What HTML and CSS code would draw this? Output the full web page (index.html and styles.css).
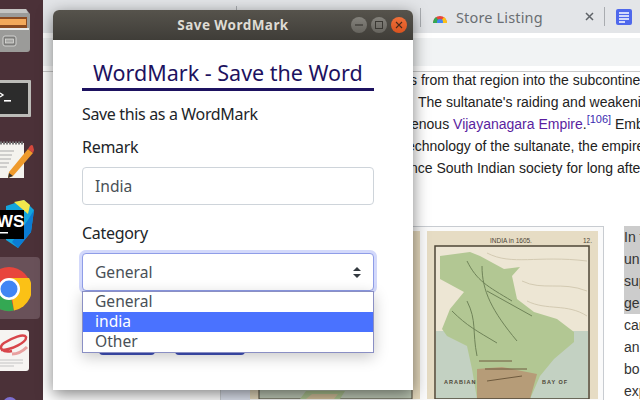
FILE: index.html
```html
<!DOCTYPE html>
<html lang="en">
<head>
	<meta charset="UTF-8">
	<title>Save WordMark</title>
	<link rel="stylesheet" href="styles.css">
</head>
<body>
	<div class="desktop">
		<div class="dock">
			<svg class="dock-icon files" width="31" height="44" viewBox="0 0 31 44">
				<path d="M3 0H26L30 5V40Q30 43 27 43H0V0Z" fill="#9b9b99"/>
				<path d="M0 0H26L28 4H0Z" fill="#c4c4c2"/>
				<rect x="0" y="8" width="27" height="11" fill="#8a4a20"/>
				<rect x="0" y="10" width="26" height="6" fill="#f3a95a"/>
				<rect x="0" y="19" width="29" height="2" fill="#e9e9e7"/>
				<rect x="3" y="27" width="13" height="10" rx="2" fill="#7d7d7b" stroke="#d2d2d0"/>
				<rect x="5.500" y="30" width="8" height="4" fill="#a9a9a7" stroke="#e4e4e2" stroke-width=".7"/>
			</svg>
			<svg class="dock-icon term" width="32" height="38" viewBox="0 0 32 38">
				<rect x="-3" y="0" width="34" height="37" rx="1" fill="#bcbcb8"/>
				<rect x="-3" y="3" width="31" height="31" fill="#2c2c2c"/>
				<path d="M0 13L3 15L0 17" fill="none" stroke="#fff" stroke-width="1.4"/>
				<rect x="4" y="20" width="7" height="1.6" fill="#fff"/>
			</svg>
			<svg class="dock-icon notes" width="34" height="40" viewBox="0 0 34 40">
				<path d="M0 2H24V37H0Z" fill="#f4f3ee"/>
				<path d="M0 2H23" stroke="#777" stroke-width="3" stroke-dasharray="2 1"/>
				<path d="M0 10H14M0 14H12M0 18H11M0 22H9M0 26H7" stroke="#aaa"/>
				<path d="M9 31L28 8L33 12L13 35L8 37Z" fill="#ee9a2c"/>
				<path d="M28 8L30 5Q32 3 33 5L34 9L33 12Z" fill="#d5483c"/>
				<path d="M9 32L8 37L13 35Z" fill="#333"/>
			</svg>
			<svg class="dock-icon ws" width="34" height="48" viewBox="0 0 34 48">
				<path d="M6 6L24 0L34 10L31 32L18 48L6 40Z" fill="#14a5dd"/>
				<path d="M14 2L24 0L30 5L28 14Z" fill="#f0e84c"/>
				<path d="M28 20L34 10L31 32L18 48L12 42Z" fill="#0b7cd4"/>
				<rect x="0" y="10" width="24" height="29" fill="#000"/>
				<text class="ws-text" x="-3" y="27">WS</text>
				<rect x="0" y="32" width="8" height="1.5" fill="#fff"/>
			</svg>
			<div class="dock-active">
				<svg width="31" height="46" viewBox="0 0 31 46">
					<circle cx="9" cy="23" r="22" fill="#e8453c"/>
					<path d="M9 23L-9 36A22 22 0 0 0 14 44.5Z" fill="#34a853"/>
					<path d="M9 12H29A22 22 0 0 1 14 44.5Z" fill="#fbc116"/>
					<circle cx="9" cy="23" r="11" fill="#fff"/>
					<circle cx="9" cy="23" r="8.5" fill="#4285f4"/>
				</svg>
			</div>
			<svg class="dock-icon paper" width="30" height="42" viewBox="0 0 30 42">
				<rect x="-4" y="0" width="33" height="41" rx="3" fill="#f6f4f2"/>
				<path d="M1 20C12 20 27 12 26 7C24 3 12 8 4 13C-3 18 3 23 12 21" fill="none" stroke="#d8454b" stroke-width="2.500"/>
				<path d="M12 24Q20 24 27 17" fill="none" stroke="#e8a0a0" stroke-width="3"/>
				<path d="M0 30H23M0 33H23M0 36H14" stroke="#c4c4c4"/>
			</svg>
			<div class="dock-peek"></div>
		</div>

		<div class="browser">
			<div class="tabbar">
				<span class="tab-sep tab-sep-a"></span>
				<span class="tab-sep tab-sep-b"></span>
				<div class="tab">
					<svg class="favicon" width="14" height="9" viewBox="0 0 14 9">
						<path d="M0 9A7 7 0 0 1 14 9H10A3 3 0 0 0 4 9Z" fill="#e8453c"/>
						<path d="M0 9A7 7 0 0 1 3 3L6 7L4 9Z" fill="#34a853"/>
						<path d="M11 3A7 7 0 0 1 14 9H10L8 7Z" fill="#fbc116"/>
						<circle cx="7" cy="8" r="3" fill="#4285f4"/>
					</svg>
					<span class="tab-title">Store Listing</span>
					<svg class="tab-close" width="9" height="9" viewBox="0 0 9 9">
						<path d="M1 1L8 8M8 1L1 8" stroke="#5f6368" stroke-width="1.500"/>
					</svg>
				</div>
				<span class="tab-sep"></span>
				<svg class="ext-icon" width="16" height="16" viewBox="0 0 16 16">
					<rect width="16" height="16" rx="2" fill="#4f68ec"/>
					<path d="M3 4H13M3 7H13M3 10H13M3 13H9" stroke="#fff" stroke-width="1.600"/>
				</svg>
			</div>
			<div class="gap-strip"></div>
			<div class="toolbar"></div>
			<div class="gap-strip gap-strip-low"></div>

			<div class="page">
				<div class="article">
					<p class="line line-a">s from that region into the subcontinent</p>
					<p class="line line-b">The sultanate's raiding and weakening</p>
					<p class="line line-c">enous <a href="#">Vijayanagara Empire</a>.<sup>[106]</sup> Embracing</p>
					<p class="line line-d">echnology of the sultanate, the empire</p>
					<p class="line line-e">nce South Indian society for long after</p>
				</div>
				<div class="figure-row">
					<div class="thumb">
						<svg class="map" width="170" height="168" viewBox="0 0 170 168">
							<rect width="170" height="168" fill="#e3d7bb"/>
							<rect x="9" y="150" width="153" height="18" fill="#bcc7b4" stroke="#4d4536"/>
							<path d="M50 168L56 160H95L90 168Z" fill="#a9bf8d"/>
							<path d="M56 168L62 163H88L84 168Z" fill="#cdbb96"/>
						</svg>
						<svg class="map" width="171" height="168" viewBox="0 0 171 168">
							<rect width="171" height="168" fill="#e6dcc4"/>
							<text class="map-title" x="63" y="12">INDIA in 1605.</text>
							<text class="map-title" x="156" y="12">12.</text>
							<rect x="8" y="15" width="154" height="153" fill="#ede6d4"/>
							<path d="M9 100H161V168H9Z" fill="#c3d1c2"/>
							<path d="M13 25L43 21L53 25L77 38L93 36L85 45L90 68L107 81L130 88L147 101V111L127 128L113 145L103 168H50L45 138L40 115L20 105L15 98L23 78L37 61L13 48Z" fill="#b2c793"/>
							<path d="M50 138L75 136L110 143L103 168H50Z" fill="#b69c78"/>
							<path d="M40 30C50 50 60 55 85 70M55 35C55 60 65 80 90 110M25 80C40 95 50 100 70 112M60 60L105 85M40 70C50 90 45 100 50 125" fill="none" stroke="#6f8358"/>
							<path d="M60 22C85 35 110 24 160 30M95 50C115 60 135 50 160 60M100 70C120 80 140 72 160 85" fill="none" stroke="#d3cab2"/>
							<path d="M52 130H85M58 138H100M60 150L95 145" stroke="#6e5a3e"/>
							<rect x="8" y="15" width="154" height="153" fill="none" stroke="#4d4536" stroke-width="1.500"/>
							<text class="map-label" x="17" y="153">ARABIAN</text>
							<text class="map-label" x="115" y="153">BAY OF</text>
						</svg>
					</div>
					<div class="side-text">
						<p class="side-line side-mark">In t</p>
						<p class="side-line side-mark">un</p>
						<p class="side-line side-mark">sup</p>
						<p class="side-line side-mark">ge</p>
						<p class="side-line">car</p>
						<p class="side-line">an</p>
						<p class="side-line">bo</p>
						<p class="side-line">exp</p>
					</div>
				</div>
			</div>
		</div>

		<div class="window">
			<div class="titlebar">
				<span class="window-title">Save WordMark</span>
				<div class="window-btns">
					<span class="win-btn">
						<svg width="8" height="8" viewBox="0 0 8 8"><path d="M0 4H8" stroke="#3a3833" stroke-width="1.200"/></svg>
					</span>
					<span class="win-btn">
						<svg width="8" height="8" viewBox="0 0 8 8"><rect x=".5" y=".5" width="7" height="7" fill="none" stroke="#3a3833"/></svg>
					</span>
					<span class="win-btn win-close">
						<svg width="8" height="8" viewBox="0 0 8 8"><path d="M1 1L7 7M7 1L1 7" stroke="#4a2a1a" stroke-width="1.100"/></svg>
					</span>
				</div>
			</div>
			<div class="popup-body">
				<h1 class="form-title">WordMark - Save the Word</h1>
				<p class="lead">Save this as a WordMark</p>
				<label class="field-label">Remark</label>
				<input class="form-control" type="text" value="India">
				<label class="field-label field-label-2">Category</label>
				<div class="select-wrap">
					<select class="form-control form-select">
						<option>General</option>
					</select>
					<svg class="select-arrow" width="8" height="11" viewBox="0 0 8 11">
						<path d="M4 0L8 4H0ZM4 11L0 7H8Z" fill="#343a40"/>
					</svg>
					<ul class="dropdown">
						<li>General</li>
						<li class="current">india</li>
						<li>Other</li>
					</ul>
				</div>
				<div class="btn-row">
					<button class="btn btn-a" aria-label="Save"></button>
					<button class="btn btn-b" aria-label="Cancel"></button>
				</div>
			</div>
		</div>
	</div>
</body>
</html>
```
FILE: styles.css
```css
*{
	margin:0;
	padding:0;
	box-sizing:border-box;
}
html,body{
	width:640px;
	height:400px;
	overflow:hidden;
}
body{
	font-family:"Noto Sans",sans-serif;
	background:#fff;
}
.desktop{
	position:relative;
	display:flex;
	width:640px;
	height:400px;
	overflow:hidden;
}

/* launcher */
.dock{
	position:relative;
	flex:0 0 43px;
	display:flex;
	flex-direction:column;
	background:#4b3138;
}
.dock-icon{
	display:block;
	flex:none;
}
.files{
	margin-top:9px;
}
.term{
	margin-top:27px;
}
.notes{
	margin-top:23px;
}
.ws{
	margin-top:19px;
}
.dock-active{
	flex:none;
	width:40px;
	height:62px;
	margin-top:9px;
	padding-top:9px;
	background:#695159;
	border-radius:0 4px 4px 0;
}
.dock-active svg{
	display:block;
}
.paper{
	margin-top:11px;
}
.dock-peek{
	position:absolute;
	left:3px;
	top:397px;
	width:14px;
	height:14px;
	border-radius:50%;
	background:#7d6fd0;
}
.ws-text{
	font:bold 17px "Liberation Sans",sans-serif;
	fill:#fff;
}

/* browser behind the window */
.browser{
	flex:1;
	min-width:0;
	display:flex;
	flex-direction:column;
}
.tabbar{
	position:relative;
	flex:0 0 33px;
	display:flex;
	align-items:center;
	padding-left:390px;
	background:#e3e5e8;
}
.tab-sep{
	flex:none;
	width:1px;
	height:19px;
	background:#a9acb0;
}
.tab-sep-a{
	position:absolute;
	left:193px;
	top:6px;
	height:12px;
}
.tab-sep-b{
	position:absolute;
	left:377px;
	top:8px;
}
.tab{
	display:flex;
	align-items:center;
	width:171px;
}
.favicon{
	flex:none;
	margin-top:3px;
}
.tab-title{
	flex:0 0 87px;
	margin-left:9px;
	font-size:14.5px;
	color:#6a6e72;
	letter-spacing:.15px;
	white-space:nowrap;
}
.tab-close{
	flex:none;
	margin-left:42px;
}
.ext-icon{
	flex:none;
	margin-left:11px;
}
.gap-strip{
	flex:0 0 5px;
	background:#fff;
}
.gap-strip-low{
	flex-basis:6px;
	border-bottom:1px solid #c9c9c9;
}
.toolbar{
	flex:0 0 28px;
	background:#f1f3f4;
}
.page{
	flex:1;
	min-height:0;
	overflow:hidden;
	background:#fff;
	font-family:"Liberation Sans",sans-serif;
	color:#222;
}
.article{
	margin-top:-3px;
}
.line{
	font-size:14px;
	line-height:22px;
	white-space:nowrap;
}
.line-a{
	margin-left:367px;
}
.line-b{
	margin-left:375px;
}
.line-c{
	margin-left:368px;
}
.line-d{
	margin-left:364px;
}
.line-e{
	margin-left:367px;
}
.line a{
	color:#5a1ea0;
	text-decoration:none;
}
.line sup{
	font-size:11px;
	line-height:0;
	color:#3a2cb0;
}
.figure-row{
	display:flex;
	margin-top:47px;
	padding-left:177px;
}
.thumb{
	display:flex;
	align-items:flex-start;
	gap:7px;
	flex:none;
	width:384px;
	height:180px;
	padding:4px 5px 0 29px;
	background:linear-gradient(90deg,#dde2ee 29px,#fafafa 29px);
	border:1px solid #c8ccd1;
}
.map{
	display:block;
	flex:none;
}
.map-title{
	font:6.5px "Liberation Sans",sans-serif;
	fill:#4d4536;
}
.map-label{
	font:bold 5.5px "Liberation Sans",sans-serif;
	letter-spacing:1px;
	fill:#4d4536;
}
.side-text{
	flex:none;
	margin-left:20px;
}
.side-line{
	width:16px;
	font-size:14px;
	line-height:22px;
	white-space:nowrap;
	color:#333;
}
.side-mark{
	background:#ccc;
}

/* the dialog */
.window{
	position:absolute;
	left:53px;
	top:10px;
	width:360px;
	height:380px;
	background:#fff;
	border-radius:6px 6px 0 0;
	box-shadow:0 4px 16px rgba(0,0,0,.5);
}
.titlebar{
	position:relative;
	display:flex;
	align-items:center;
	justify-content:center;
	height:30px;
	background:linear-gradient(#56534c,#3f3d38);
	border-radius:6px 6px 0 0;
}
.window-title{
	font-size:13.5px;
	font-weight:bold;
	color:#dedbd4;
	letter-spacing:.45px;
}
.window-btns{
	position:absolute;
	right:6px;
	top:7px;
	display:flex;
	gap:4px;
}
.win-btn{
	display:flex;
	align-items:center;
	justify-content:center;
	width:16px;
	height:16px;
	border-radius:50%;
	background:linear-gradient(#84827c,#66645e);
}
.win-close{
	background:linear-gradient(#f0703a,#d9531f);
}
.popup-body{
	padding:18px 39px 0 29px;
	color:#212529;
}
.form-title{
	height:33px;
	padding-left:11px;
	font-size:21.5px;
	font-weight:normal;
	line-height:30px;
	color:#1d1260;
	border-bottom:3px solid #1d1260;
	white-space:nowrap;
}
.lead{
	margin-top:11px;
	font-size:16px;
	line-height:24px;
	letter-spacing:-.35px;
}
.field-label{
	display:block;
	margin-top:9px;
	font-size:16px;
	line-height:24px;
	letter-spacing:-.3px;
}
.field-label-2{
	margin-top:16px;
}
.form-control{
	display:block;
	width:292px;
	height:38px;
	margin-top:8px;
	padding:0 12px;
	font-family:"Noto Sans",sans-serif;
	font-size:15.6px;
	color:#495057;
	background:#fff;
	border:1px solid #ced4da;
	border-radius:4px;
	outline:none;
}
.select-wrap{
	position:relative;
	margin-top:8px;
}
.form-select{
	margin-top:0;
	appearance:none;
	border-color:#8f9de8;
	box-shadow:0 0 0 3px #d3d9fb;
}
.select-arrow{
	position:absolute;
	right:13px;
	top:14px;
}
.dropdown{
	position:absolute;
	left:0;
	top:38px;
	z-index:2;
	width:292px;
	list-style:none;
	background:#fff;
	border:1px solid #8a8fc4;
	box-shadow:0 4px 14px rgba(0,0,0,.22);
}
.dropdown li{
	height:20px;
	padding-left:12px;
	font-size:15.6px;
	line-height:19px;
	color:#495057;
}
.dropdown li.current{
	color:#fff;
	background:#4a72ff;
}
.btn-row{
	display:flex;
	gap:20px;
	margin-top:26px;
	padding-left:17px;
}
.btn{
	height:38px;
	background:#3f4fb8;
	border:none;
	border-radius:4px;
}
.btn-a{
	width:56px;
}
.btn-b{
	width:70px;
}
```
